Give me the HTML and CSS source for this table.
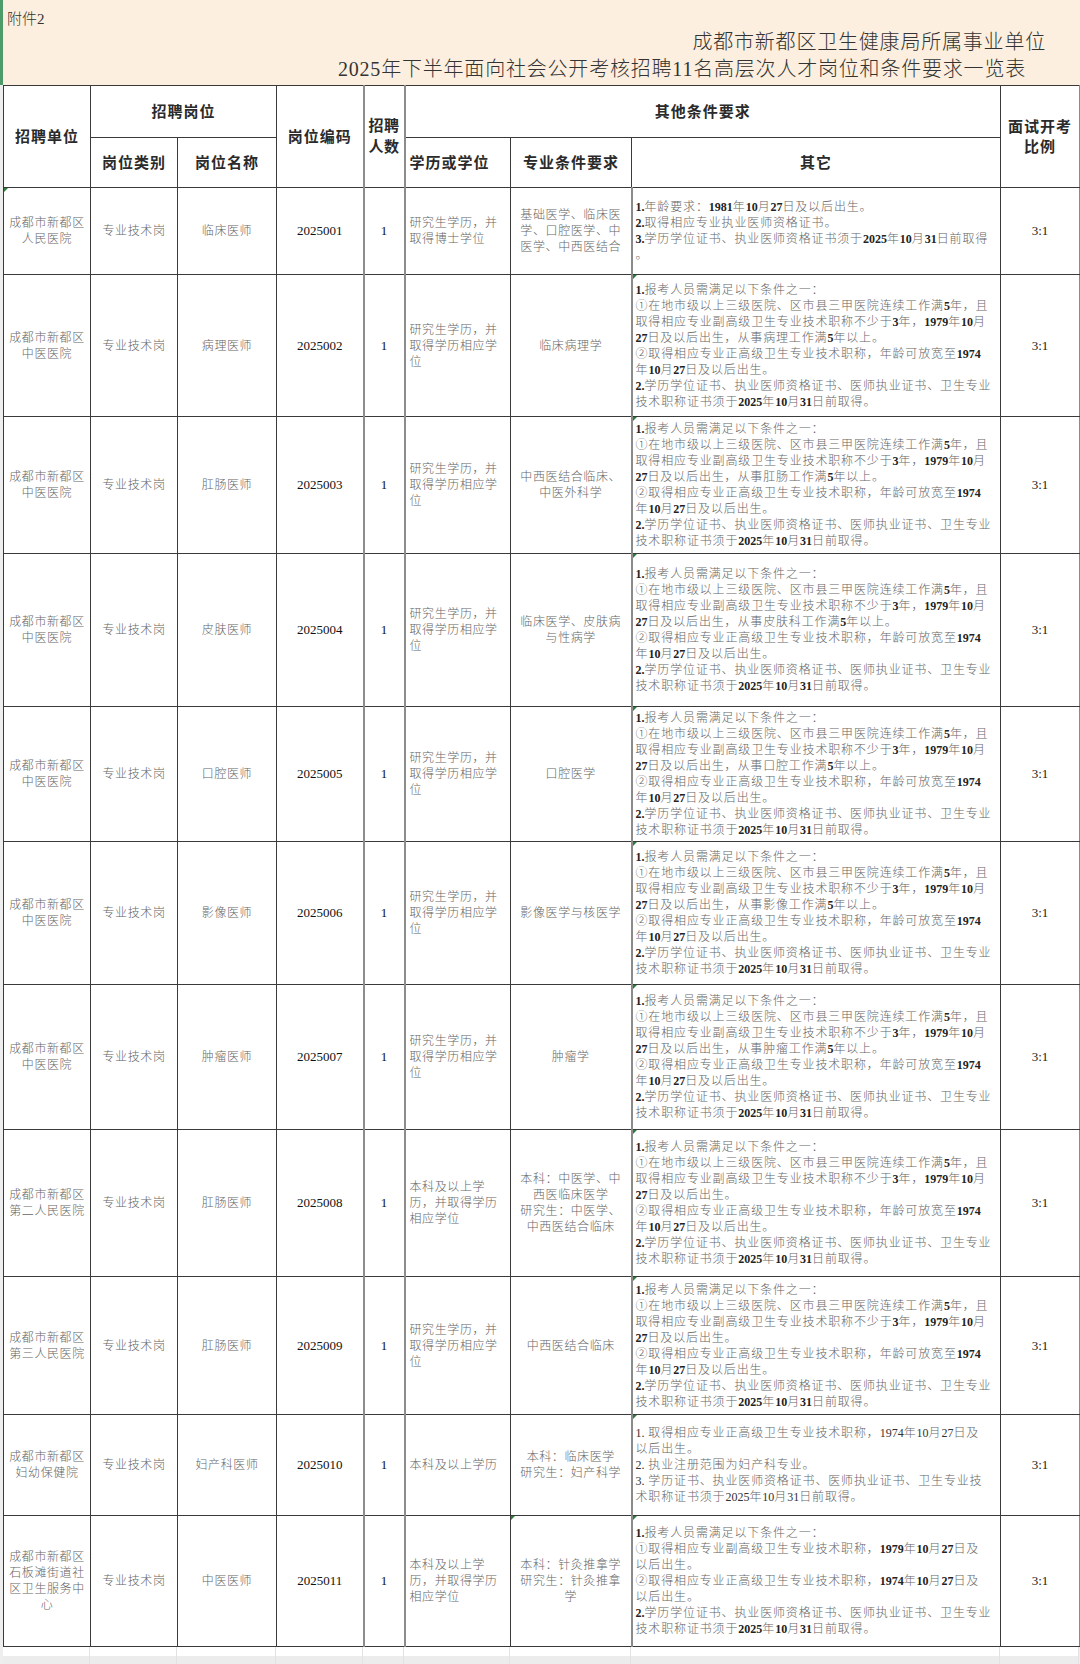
FILE: index.html
```html
<!DOCTYPE html>
<html lang="zh-CN">
<head>
<meta charset="utf-8">
<title>成都市新都区卫生健康局所属事业单位招聘一览表</title>
<link rel="stylesheet" href="styles.css">
</head>
<body>
<header class="band">
  <div class="att">附件2</div>
  <div class="title">
    <div class="t1">成都市新都区卫生健康局所属事业单位</div>
    <div class="t2">2025年下半年面向社会公开考核招聘11名高层次人才岗位和条件要求一览表</div>
  </div>
</header>
<table class="grid">
  <colgroup>
    <col class="w1"><col class="w2"><col class="w3"><col class="w4"><col class="w5"><col class="w6"><col class="w7"><col class="w8"><col class="w9">
  </colgroup>
  <thead>
    <tr class="hr1">
      <th rowspan="2">招聘单位</th>
      <th colspan="2">招聘岗位</th>
      <th rowspan="2">岗位编码</th>
      <th rowspan="2" class="c5 tight">招聘<br>人数</th>
      <th colspan="3">其他条件要求</th>
      <th rowspan="2" class="last">面试开考<br>比例</th>
    </tr>
    <tr class="hr2">
      <th>岗位类别</th>
      <th>岗位名称</th>
      <th class="left">学历或学位</th>
      <th>专业条件要求</th>
      <th>其它</th>
    </tr>
  </thead>
  <tbody>
    <tr class="r1">
      <td class="mk">成都市新都区<br>人民医院</td>
      <td>专业技术岗</td>
      <td>临床医师</td>
      <td class="code">2025001</td>
      <td class="num c5">1</td>
      <td class="edu">研究生学历，并<br>取得博士学位</td>
      <td class="maj">基础医学、临床医<br>学、口腔医学、中<br>医学、中西医结合</td>
      <td class="oth"><b>1.</b>年龄要求：<b>1981</b>年<b>10</b>月<b>27</b>日及以后出生。<br><b>2.</b>取得相应专业执业医师资格证书。<br><b>3.</b>学历学位证书、执业医师资格证书须于<b>2025</b>年<b>10</b>月<b>31</b>日前取得<br>。</td>
      <td class="ratio">3:1</td>
    </tr>
    <tr class="r2">
      <td>成都市新都区<br>中医医院</td>
      <td>专业技术岗</td>
      <td>病理医师</td>
      <td class="code">2025002</td>
      <td class="num c5">1</td>
      <td class="edu">研究生学历，并<br>取得学历相应学<br>位</td>
      <td class="maj">临床病理学</td>
      <td class="oth mk"><b>1.</b>报考人员需满足以下条件之一：<br>①在地市级以上三级医院、区市县三甲医院连续工作满<b>5</b>年，且<br>取得相应专业副高级卫生专业技术职称不少于<b>3</b>年，<b>1979</b>年<b>10</b>月<br><b>27</b>日及以后出生，从事病理工作满<b>5</b>年以上。<br>②取得相应专业正高级卫生专业技术职称，年龄可放宽至<b>1974</b><br>年<b>10</b>月<b>27</b>日及以后出生。<br><b>2.</b>学历学位证书、执业医师资格证书、医师执业证书、卫生专业<br>技术职称证书须于<b>2025</b>年<b>10</b>月<b>31</b>日前取得。</td>
      <td class="ratio">3:1</td>
    </tr>
    <tr class="r3">
      <td>成都市新都区<br>中医医院</td>
      <td>专业技术岗</td>
      <td>肛肠医师</td>
      <td class="code">2025003</td>
      <td class="num c5">1</td>
      <td class="edu">研究生学历，并<br>取得学历相应学<br>位</td>
      <td class="maj">中西医结合临床、<br>中医外科学</td>
      <td class="oth mk"><b>1.</b>报考人员需满足以下条件之一：<br>①在地市级以上三级医院、区市县三甲医院连续工作满<b>5</b>年，且<br>取得相应专业副高级卫生专业技术职称不少于<b>3</b>年，<b>1979</b>年<b>10</b>月<br><b>27</b>日及以后出生，从事肛肠工作满<b>5</b>年以上。<br>②取得相应专业正高级卫生专业技术职称，年龄可放宽至<b>1974</b><br>年<b>10</b>月<b>27</b>日及以后出生。<br><b>2.</b>学历学位证书、执业医师资格证书、医师执业证书、卫生专业<br>技术职称证书须于<b>2025</b>年<b>10</b>月<b>31</b>日前取得。</td>
      <td class="ratio">3:1</td>
    </tr>
    <tr class="r4">
      <td>成都市新都区<br>中医医院</td>
      <td>专业技术岗</td>
      <td>皮肤医师</td>
      <td class="code">2025004</td>
      <td class="num c5">1</td>
      <td class="edu">研究生学历，并<br>取得学历相应学<br>位</td>
      <td class="maj">临床医学、皮肤病<br>与性病学</td>
      <td class="oth mk"><b>1.</b>报考人员需满足以下条件之一：<br>①在地市级以上三级医院、区市县三甲医院连续工作满<b>5</b>年，且<br>取得相应专业副高级卫生专业技术职称不少于<b>3</b>年，<b>1979</b>年<b>10</b>月<br><b>27</b>日及以后出生，从事皮肤科工作满<b>5</b>年以上。<br>②取得相应专业正高级卫生专业技术职称，年龄可放宽至<b>1974</b><br>年<b>10</b>月<b>27</b>日及以后出生。<br><b>2.</b>学历学位证书、执业医师资格证书、医师执业证书、卫生专业<br>技术职称证书须于<b>2025</b>年<b>10</b>月<b>31</b>日前取得。</td>
      <td class="ratio">3:1</td>
    </tr>
    <tr class="r5">
      <td>成都市新都区<br>中医医院</td>
      <td>专业技术岗</td>
      <td>口腔医师</td>
      <td class="code">2025005</td>
      <td class="num c5">1</td>
      <td class="edu">研究生学历，并<br>取得学历相应学<br>位</td>
      <td class="maj">口腔医学</td>
      <td class="oth mk"><b>1.</b>报考人员需满足以下条件之一：<br>①在地市级以上三级医院、区市县三甲医院连续工作满<b>5</b>年，且<br>取得相应专业副高级卫生专业技术职称不少于<b>3</b>年，<b>1979</b>年<b>10</b>月<br><b>27</b>日及以后出生，从事口腔工作满<b>5</b>年以上。<br>②取得相应专业正高级卫生专业技术职称，年龄可放宽至<b>1974</b><br>年<b>10</b>月<b>27</b>日及以后出生。<br><b>2.</b>学历学位证书、执业医师资格证书、医师执业证书、卫生专业<br>技术职称证书须于<b>2025</b>年<b>10</b>月<b>31</b>日前取得。</td>
      <td class="ratio">3:1</td>
    </tr>
    <tr class="r6">
      <td>成都市新都区<br>中医医院</td>
      <td>专业技术岗</td>
      <td>影像医师</td>
      <td class="code">2025006</td>
      <td class="num c5">1</td>
      <td class="edu">研究生学历，并<br>取得学历相应学<br>位</td>
      <td class="maj">影像医学与核医学</td>
      <td class="oth mk"><b>1.</b>报考人员需满足以下条件之一：<br>①在地市级以上三级医院、区市县三甲医院连续工作满<b>5</b>年，且<br>取得相应专业副高级卫生专业技术职称不少于<b>3</b>年，<b>1979</b>年<b>10</b>月<br><b>27</b>日及以后出生，从事影像工作满<b>5</b>年以上。<br>②取得相应专业正高级卫生专业技术职称，年龄可放宽至<b>1974</b><br>年<b>10</b>月<b>27</b>日及以后出生。<br><b>2.</b>学历学位证书、执业医师资格证书、医师执业证书、卫生专业<br>技术职称证书须于<b>2025</b>年<b>10</b>月<b>31</b>日前取得。</td>
      <td class="ratio">3:1</td>
    </tr>
    <tr class="r7">
      <td>成都市新都区<br>中医医院</td>
      <td>专业技术岗</td>
      <td>肿瘤医师</td>
      <td class="code">2025007</td>
      <td class="num c5">1</td>
      <td class="edu">研究生学历，并<br>取得学历相应学<br>位</td>
      <td class="maj">肿瘤学</td>
      <td class="oth mk"><b>1.</b>报考人员需满足以下条件之一：<br>①在地市级以上三级医院、区市县三甲医院连续工作满<b>5</b>年，且<br>取得相应专业副高级卫生专业技术职称不少于<b>3</b>年，<b>1979</b>年<b>10</b>月<br><b>27</b>日及以后出生，从事肿瘤工作满<b>5</b>年以上。<br>②取得相应专业正高级卫生专业技术职称，年龄可放宽至<b>1974</b><br>年<b>10</b>月<b>27</b>日及以后出生。<br><b>2.</b>学历学位证书、执业医师资格证书、医师执业证书、卫生专业<br>技术职称证书须于<b>2025</b>年<b>10</b>月<b>31</b>日前取得。</td>
      <td class="ratio">3:1</td>
    </tr>
    <tr class="r8">
      <td>成都市新都区<br>第二人民医院</td>
      <td>专业技术岗</td>
      <td>肛肠医师</td>
      <td class="code">2025008</td>
      <td class="num c5">1</td>
      <td class="edu">本科及以上学<br>历，并取得学历<br>相应学位</td>
      <td class="maj">本科：中医学、中<br>西医临床医学<br>研究生：中医学、<br>中西医结合临床</td>
      <td class="oth mk"><b>1.</b>报考人员需满足以下条件之一：<br>①在地市级以上三级医院、区市县三甲医院连续工作满<b>5</b>年，且<br>取得相应专业副高级卫生专业技术职称不少于<b>3</b>年，<b>1979</b>年<b>10</b>月<br><b>27</b>日及以后出生。<br>②取得相应专业正高级卫生专业技术职称，年龄可放宽至<b>1974</b><br>年<b>10</b>月<b>27</b>日及以后出生。<br><b>2.</b>学历学位证书、执业医师资格证书、医师执业证书、卫生专业<br>技术职称证书须于<b>2025</b>年<b>10</b>月<b>31</b>日前取得。</td>
      <td class="ratio">3:1</td>
    </tr>
    <tr class="r9">
      <td>成都市新都区<br>第三人民医院</td>
      <td>专业技术岗</td>
      <td>肛肠医师</td>
      <td class="code">2025009</td>
      <td class="num c5">1</td>
      <td class="edu">研究生学历，并<br>取得学历相应学<br>位</td>
      <td class="maj">中西医结合临床</td>
      <td class="oth mk"><b>1.</b>报考人员需满足以下条件之一：<br>①在地市级以上三级医院、区市县三甲医院连续工作满<b>5</b>年，且<br>取得相应专业副高级卫生专业技术职称不少于<b>3</b>年，<b>1979</b>年<b>10</b>月<br><b>27</b>日及以后出生。<br>②取得相应专业正高级卫生专业技术职称，年龄可放宽至<b>1974</b><br>年<b>10</b>月<b>27</b>日及以后出生。<br><b>2.</b>学历学位证书、执业医师资格证书、医师执业证书、卫生专业<br>技术职称证书须于<b>2025</b>年<b>10</b>月<b>31</b>日前取得。</td>
      <td class="ratio">3:1</td>
    </tr>
    <tr class="r10">
      <td>成都市新都区<br>妇幼保健院</td>
      <td>专业技术岗</td>
      <td>妇产科医师</td>
      <td class="code">2025010</td>
      <td class="num c5">1</td>
      <td class="edu">本科及以上学历</td>
      <td class="maj">本科：临床医学<br>研究生：妇产科学</td>
      <td class="oth mk"><i>1.</i> 取得相应专业正高级卫生专业技术职称，<i>1974</i>年<i>10</i>月<i>27</i>日及<br>以后出生。<br><i>2.</i> 执业注册范围为妇产科专业。<br><i>3.</i> 学历证书、执业医师资格证书、医师执业证书、卫生专业技<br>术职称证书须于<i>2025</i>年<i>10</i>月<i>31</i>日前取得。</td>
      <td class="ratio">3:1</td>
    </tr>
    <tr class="r11">
      <td>成都市新都区<br>石板滩街道社<br>区卫生服务中<br>心</td>
      <td>专业技术岗</td>
      <td>中医医师</td>
      <td class="code">2025011</td>
      <td class="num c5">1</td>
      <td class="edu">本科及以上学<br>历，并取得学历<br>相应学位</td>
      <td class="maj mk">本科：针灸推拿学<br>研究生：针灸推拿<br>学</td>
      <td class="oth mk"><b>1.</b>报考人员需满足以下条件之一：<br>①取得相应专业副高级卫生专业技术职称，<b>1979</b>年<b>10</b>月<b>27</b>日及<br>以后出生。<br>②取得相应专业正高级卫生专业技术职称，<b>1974</b>年<b>10</b>月<b>27</b>日及<br>以后出生。<br><b>2.</b>学历学位证书、执业医师资格证书、医师执业证书、卫生专业<br>技术职称证书须于<b>2025</b>年<b>10</b>月<b>31</b>日前取得。</td>
      <td class="ratio">3:1</td>
    </tr>
  </tbody>
</table>
<div class="tail">
  <span></span><span></span><span></span><span></span><span></span><span></span><span></span><span></span><span></span>
</div>
</body>
</html>
```
FILE: styles.css
```css
* { box-sizing: border-box; }
html, body { margin: 0; padding: 0; }
body {
  width: 1080px;
  height: 1664px;
  overflow: hidden;
  background: #eeeeee;
  font-family: "Liberation Serif", "Noto Sans CJK SC", serif;
  color: #666;
}

/* title band */
.band {
  height: 85px;
  background: #fcefdf;
  border-left: 3px solid #4e9a68;
  padding-left: 4px;
  display: flex;
  flex-direction: column;
}
.att {
  font-size: 15px;
  line-height: 20px;
  padding-top: 9px;
  color: #333;
  font-weight: 300;
}
.title {
  display: flex;
  flex-direction: column;
  align-items: flex-end;
  color: #333;
  font-size: 20px;
  font-weight: 300;
  letter-spacing: 0.8px;
}
.t1 { line-height: 27px; margin-right: 34px; }
.t2 { line-height: 27px; margin-right: 54px; }

/* table */
.grid {
  margin-left: 3px;
  width: 1076px;
  border-collapse: collapse;
  table-layout: fixed;
  background: #fff;
}
.w1 { width: 87px; }
.w2 { width: 87px; }
.w3 { width: 99px; }
.w4 { width: 87px; }
.w5 { width: 41px; }
.w6 { width: 106px; }
.w7 { width: 121px; }
.w8 { width: 369px; }
.w9 { width: 79px; }

.grid th,
.grid td {
  border: 1px solid #3a3a3a;
  padding: 0;
  vertical-align: middle;
  text-align: center;
  position: relative;
}
.grid th {
  font-size: 15px;
  line-height: 20px;
  letter-spacing: 1px;
  font-weight: 700;
  color: #2a2a2a;
}
.grid th.left { text-align: left; padding-left: 4px; }
.grid th.tight { letter-spacing: 0.5px; line-height: 21px; }
.grid th.last, .grid td.ratio { border-right-color: #8a8a8a; }

.grid td {
  font-size: 12px;
  line-height: 16px;
  letter-spacing: 0.6px;
  font-weight: 300;
  color: #666;
  white-space: nowrap;
}
.grid .c5 {
  border-left: 2px solid #8c8c8c;
  border-right: 2px solid #8c8c8c;
}
.grid td.code,
.grid td.num {
  font-size: 13px;
  letter-spacing: 0;
  font-weight: 400;
  color: #111;
}
.grid td.ratio {
  font-size: 13px;
  letter-spacing: 0;
  font-weight: 400;
  color: #222;
}
.grid td.edu { text-align: left; padding-left: 4px; }
.grid td.maj { text-align: center; }
.grid td.oth {
  text-align: left;
  padding-left: 3px;
  letter-spacing: 0.85px;
  border-left: 2px solid #8a8a8a;
  color: #666;
}
.grid td b {
  font-weight: 700;
  letter-spacing: 0;
  color: #222;
}
.grid td i {
  font-style: normal;
  font-weight: 400;
  letter-spacing: 0;
  color: #333;
}

/* comment markers */
.mk::before {
  content: "";
  position: absolute;
  left: 0;
  top: 0;
  border-top: 4px solid #2f7d3a;
  border-right: 4px solid transparent;
}

/* row heights */
.hr1 { height: 52px; }
.hr2 { height: 50px; }
.r1 { height: 87px; }
.r2 { height: 142px; }
.r3 { height: 137px; }
.r4 { height: 153px; }
.r5 { height: 135px; }
.r6 { height: 143px; }
.r7 { height: 145px; }
.r8 { height: 147px; }
.r9 { height: 138px; }
.r10 { height: 101px; }
.r11 { height: 131px; }

/* empty sheet rows below */
.tail {
  margin-left: 3px;
  width: 1076px;
  height: 20px;
  display: grid;
  grid-template-columns: 87px 87px 99px 87px 41px 106px 121px 369px 79px;
  background: linear-gradient(#ffffff 0 9px, #ececec 9px);
}
.tail span { border-right: 1px solid #e2e2e2; }
```
